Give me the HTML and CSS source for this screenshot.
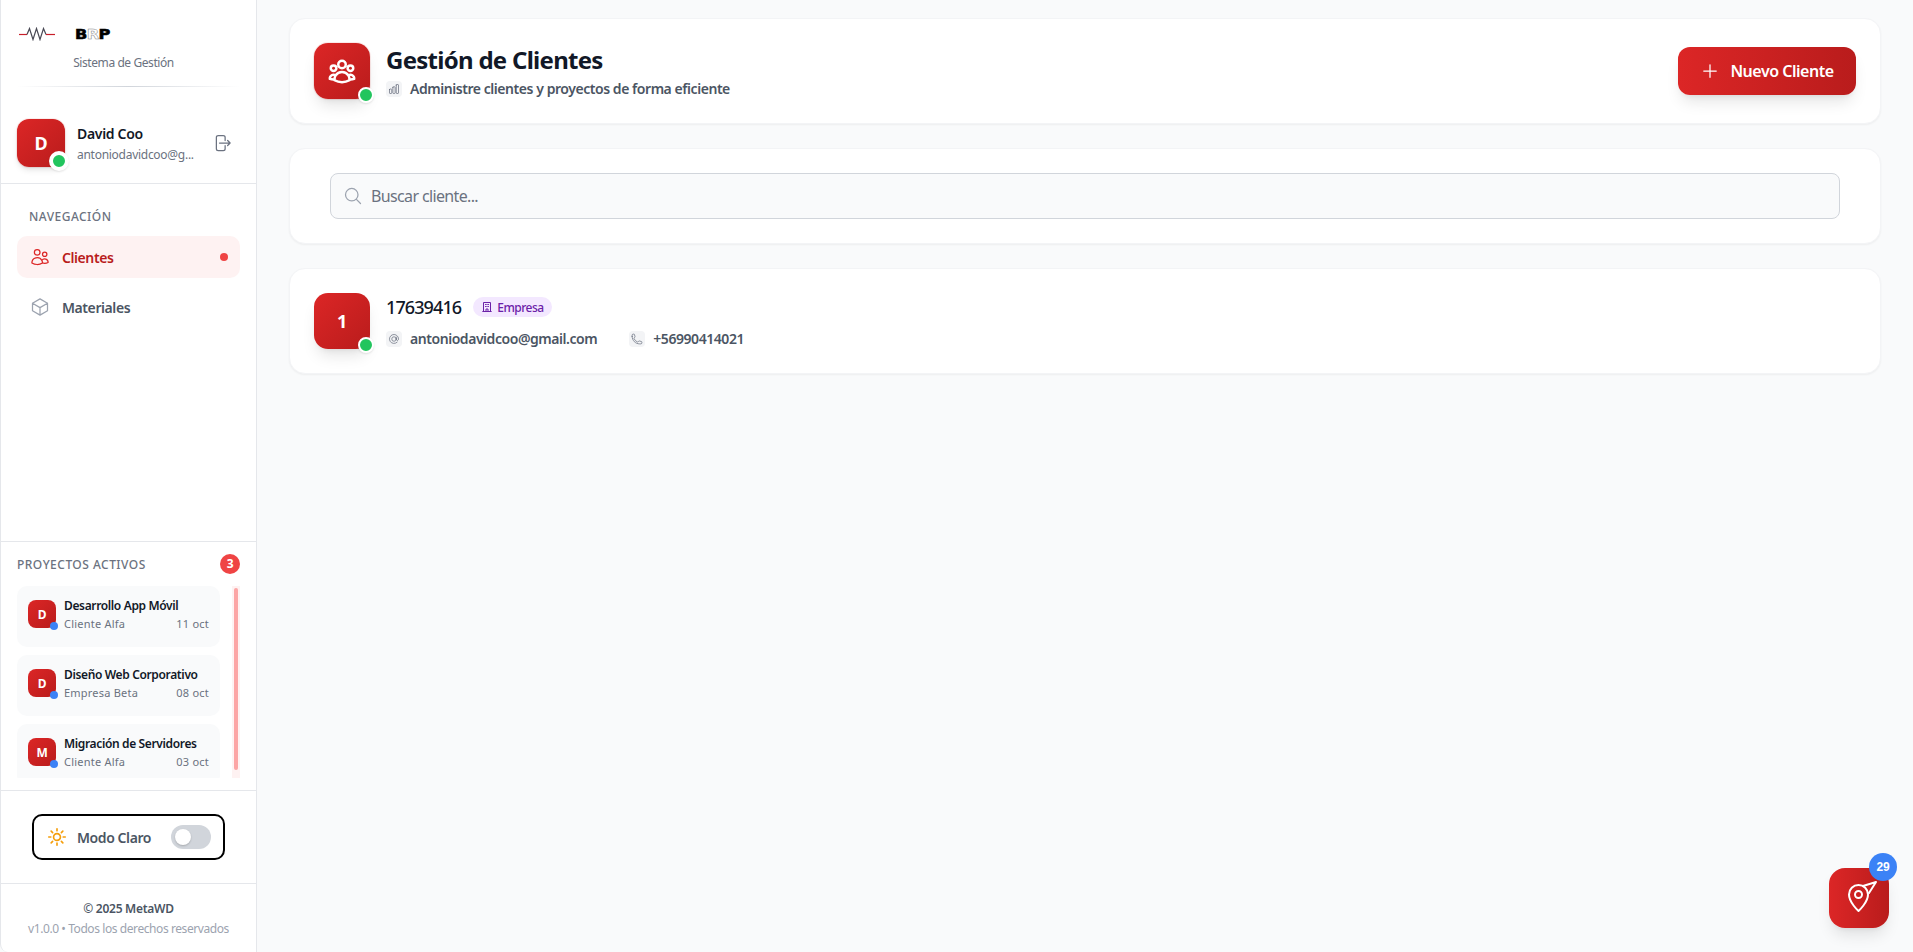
FILE: index.html
```html
<!DOCTYPE html>
<html lang="es">
<head>
    <meta charset="UTF-8">
    <meta name="viewport" content="width=device-width, initial-scale=1.0">
    <title>Gestión de Clientes</title>
    <link rel="stylesheet" href="styles.css">
</head>
<body>
    <div class="app">
        <aside class="sidebar">
            <div class="brand">
                <div class="logo">
                    <svg class="logo-wave" viewBox="0 0 36 14" fill="none" stroke-width="1.2">
                        <path d="M0 7.5h8" stroke="#c81e2a"/>
                        <path d="M8 7.5l2.5-6 3.5 11 3.5-11 3.5 11 3.5-11 2.5 6" stroke="#4a4a55"/>
                        <path d="M27 7.5h9" stroke="#c81e2a"/>
                    </svg>
                    <span class="logo-text">B<span class="logo-r">R</span>P</span>
                </div>
                <p class="brand-sub">Sistema de Gestión</p>
                <div class="brand-line"></div>
            </div>

            <div class="user">
                <div class="avatar avatar-user">D<span class="status status-user"></span></div>
                <div class="user-info">
                    <div class="user-name">David Coo</div>
                    <div class="user-mail">antoniodavidcoo@g...</div>
                </div>
                <svg class="logout" viewBox="0 0 24 24" fill="none" stroke="currentColor" stroke-width="1.5" stroke-linecap="round" stroke-linejoin="round">
                    <path d="M15.75 9V5.25A2.25 2.25 0 0 0 13.5 3h-6a2.25 2.25 0 0 0-2.25 2.25v13.5A2.25 2.25 0 0 0 7.5 21h6a2.25 2.25 0 0 0 2.25-2.25V15m3 0 3-3m0 0-3-3m3 3H9"/>
                </svg>
            </div>

            <nav class="nav">
                <div class="nav-title">NAVEGACIÓN</div>
                <a class="nav-item nav-active">
                    <svg class="nav-icon" viewBox="0 0 24 24" fill="none" stroke="currentColor" stroke-width="1.5" stroke-linecap="round" stroke-linejoin="round">
                        <path d="M15 19.128a9.38 9.38 0 0 0 2.625.372 9.337 9.337 0 0 0 4.121-.952 4.125 4.125 0 0 0-7.533-2.493M15 19.128v-.003c0-1.113-.285-2.16-.786-3.07M15 19.128v.106A12.318 12.318 0 0 1 8.624 21c-2.331 0-4.512-.645-6.374-1.766l-.001-.109a6.375 6.375 0 0 1 11.964-3.07M12 6.375a3.375 3.375 0 1 1-6.75 0 3.375 3.375 0 0 1 6.75 0Zm8.25 2.25a2.625 2.625 0 1 1-5.25 0 2.625 2.625 0 0 1 5.25 0Z"/>
                    </svg>
                    <span>Clientes</span>
                    <span class="nav-dot"></span>
                </a>
                <a class="nav-item">
                    <svg class="nav-icon nav-icon-muted" viewBox="0 0 24 24" fill="none" stroke="currentColor" stroke-width="1.5" stroke-linecap="round" stroke-linejoin="round">
                        <path d="m21 7.5-9-5.25L3 7.5m18 0-9 5.25m9-5.25v9l-9 5.25M3 7.5l9 5.25M3 7.5v9l9 5.25m0-9v9"/>
                    </svg>
                    <span>Materiales</span>
                </a>
            </nav>

            <section class="projects">
                <div class="projects-head">
                    <span class="projects-title">PROYECTOS ACTIVOS</span>
                    <span class="projects-count">3</span>
                </div>
                <div class="projects-body">
                    <div class="projects-list">
                        <div class="project">
                            <div class="avatar avatar-project">D<span class="status status-project"></span></div>
                            <div class="project-info">
                                <div class="project-name">Desarrollo App Móvil</div>
                                <div class="project-meta"><span>Cliente Alfa</span><span>11 oct</span></div>
                            </div>
                        </div>
                        <div class="project">
                            <div class="avatar avatar-project">D<span class="status status-project"></span></div>
                            <div class="project-info">
                                <div class="project-name">Diseño Web Corporativo</div>
                                <div class="project-meta"><span>Empresa Beta</span><span>08 oct</span></div>
                            </div>
                        </div>
                        <div class="project">
                            <div class="avatar avatar-project">M<span class="status status-project"></span></div>
                            <div class="project-info">
                                <div class="project-name">Migración de Servidores</div>
                                <div class="project-meta"><span>Cliente Alfa</span><span>03 oct</span></div>
                            </div>
                        </div>
                    </div>
                    <div class="scroll-track"><div class="scroll-thumb"></div></div>
                </div>
            </section>

            <div class="theme">
                <div class="theme-box">
                    <svg class="theme-sun" viewBox="0 0 24 24" fill="none" stroke="currentColor" stroke-width="1.8" stroke-linecap="round" stroke-linejoin="round">
                        <path d="M12 3v2.25m6.364.386-1.591 1.591M21 12h-2.25m-.386 6.364-1.591-1.591M12 18.75V21m-4.773-4.227-1.591 1.591M5.25 12H3m4.227-4.773L5.636 5.636M15.75 12a3.75 3.75 0 1 1-7.5 0 3.75 3.75 0 0 1 7.5 0Z"/>
                    </svg>
                    <span class="theme-label">Modo Claro</span>
                    <span class="switch"><span class="switch-knob"></span></span>
                </div>
            </div>

            <footer class="side-foot">
                <div class="side-copy">© 2025 MetaWD</div>
                <div class="side-version">v1.0.0 • Todos los derechos reservados</div>
            </footer>
        </aside>

        <main class="main">
            <div class="card card-head">
                <div class="avatar avatar-big avatar-ring">
                    <svg class="head-icon" viewBox="0 0 24 24" fill="none" stroke="currentColor" stroke-width="2" stroke-linecap="round" stroke-linejoin="round">
                        <path d="M18 18.72a9.094 9.094 0 0 0 3.741-.479 3 3 0 0 0-4.682-2.72m.94 3.198.001.031c0 .225-.012.447-.037.666A11.944 11.944 0 0 1 12 21c-2.17 0-4.207-.576-5.963-1.584A6.062 6.062 0 0 1 6 18.719m12 0a5.971 5.971 0 0 0-.941-3.197m0 0A5.995 5.995 0 0 0 12 12.75a5.995 5.995 0 0 0-5.058 2.772m0 0a3 3 0 0 0-4.681 2.72 8.986 8.986 0 0 0 3.74.477m.94-3.197a5.971 5.971 0 0 0-.94 3.197M15 6.75a3 3 0 1 1-6 0 3 3 0 0 1 6 0Zm6 3a2.25 2.25 0 1 1-4.5 0 2.25 2.25 0 0 1 4.5 0Zm-13.5 0a2.25 2.25 0 1 1-4.5 0 2.25 2.25 0 0 1 4.5 0Z"/>
                    </svg>
                    <span class="status status-big"></span>
                </div>
                <div class="head-text">
                    <h1>Gestión de Clientes</h1>
                    <div class="line">
                        <span class="chip">
                            <svg viewBox="0 0 24 24" fill="none" stroke="currentColor" stroke-width="1.5" stroke-linecap="round" stroke-linejoin="round">
                                <path d="M3 13.125C3 12.504 3.504 12 4.125 12h2.25c.621 0 1.125.504 1.125 1.125v6.75C7.5 20.496 6.996 21 6.375 21h-2.25A1.125 1.125 0 0 1 3 19.875v-6.75ZM9.75 8.625c0-.621.504-1.125 1.125-1.125h2.25c.621 0 1.125.504 1.125 1.125v11.25c0 .621-.504 1.125-1.125 1.125h-2.25a1.125 1.125 0 0 1-1.125-1.125V8.625ZM16.5 4.125c0-.621.504-1.125 1.125-1.125h2.25C20.496 3 21 3.504 21 4.125v15.75c0 .621-.504 1.125-1.125 1.125h-2.25a1.125 1.125 0 0 1-1.125-1.125V4.125Z"/>
                            </svg>
                        </span>
                        <span>Administre clientes y proyectos de forma eficiente</span>
                    </div>
                </div>
                <button class="btn-new" type="button">
                    <svg viewBox="0 0 24 24" fill="none" stroke="currentColor" stroke-width="1.5" stroke-linecap="round" stroke-linejoin="round">
                        <path d="M12 4.5v15m7.5-7.5h-15"/>
                    </svg>
                    Nuevo Cliente
                </button>
            </div>

            <div class="card card-search">
                <div class="search">
                    <svg viewBox="0 0 24 24" fill="none" stroke="currentColor" stroke-width="1.5" stroke-linecap="round" stroke-linejoin="round">
                        <path d="m21 21-5.197-5.197m0 0A7.5 7.5 0 1 0 5.196 5.196a7.5 7.5 0 0 0 10.607 10.607Z"/>
                    </svg>
                    <input type="text" placeholder="Buscar cliente...">
                </div>
            </div>

            <div class="card card-client">
                <div class="avatar avatar-big">1<span class="status status-big"></span></div>
                <div class="client-text">
                    <div class="client-top">
                        <span class="client-name">17639416</span>
                        <span class="tag">
                            <svg viewBox="0 0 24 24" fill="none" stroke="currentColor" stroke-width="2" stroke-linecap="round" stroke-linejoin="round">
                                <path d="M5 21V3h14v18M3.5 21h17M9 7h1.5M13.5 7H15M9 11h1.5M13.5 11H15M10 21v-5h4v5"/>
                            </svg>
                            Empresa
                        </span>
                    </div>
                    <div class="client-contacts">
                        <div class="line">
                            <span class="chip">
                                <svg viewBox="0 0 24 24" fill="none" stroke="currentColor" stroke-width="1.5" stroke-linecap="round" stroke-linejoin="round">
                                    <path d="M16.5 12a4.5 4.5 0 1 1-9 0 4.5 4.5 0 0 1 9 0Zm0 0c0 1.657 1.007 3 2.25 3S21 13.657 21 12a9 9 0 1 0-2.636 6.364M16.5 12V8.25"/>
                                </svg>
                            </span>
                            <span>antoniodavidcoo@gmail.com</span>
                        </div>
                        <div class="line">
                            <span class="chip">
                                <svg viewBox="0 0 24 24" fill="none" stroke="currentColor" stroke-width="1.5" stroke-linecap="round" stroke-linejoin="round">
                                    <path d="M2.25 6.75c0 8.284 6.716 15 15 15h2.25a2.25 2.25 0 0 0 2.25-2.25v-1.372c0-.516-.351-.966-.852-1.091l-4.423-1.106c-.44-.11-.902.055-1.173.417l-.97 1.293c-.282.376-.769.542-1.21.38a12.035 12.035 0 0 1-7.143-7.143c-.162-.441.004-.928.38-1.21l1.293-.97c.363-.271.527-.734.417-1.173L6.963 3.102a1.125 1.125 0 0 0-1.091-.852H4.5A2.25 2.25 0 0 0 2.25 4.5v2.25Z"/>
                                </svg>
                            </span>
                            <span>+56990414021</span>
                        </div>
                    </div>
                </div>
            </div>
        </main>
    </div>

    <button class="fab" type="button">
        <svg viewBox="0 0 36 36" fill="none" stroke="currentColor" stroke-width="2" stroke-linecap="round" stroke-linejoin="round">
            <path d="M27 14.500c0 8-9.500 16.500-9.500 16.500S8 22.500 8 14.500a9.500 9.500 0 0 1 19 0Z"/>
            <circle cx="17.500" cy="14.500" r="3.500"/>
            <path d="M22 6 35 2l-7 11"/>
        </svg>
        <span class="fab-count">29</span>
    </button>
</body>
</html>
```

FILE: styles.css
```css
* {
    box-sizing: border-box;
    letter-spacing: -0.023em;
}
html, body {
    height: 100%;
}
body {
    margin: 0;
    font-family: "Noto Sans", "Open Sans", sans-serif;
    background-color: #f9fafb;
    color: #111827;
    overflow: hidden;
}
.app {
    display: flex;
    height: 100vh;
}

/* barra lateral */
.sidebar {
    width: 257px;
    flex-shrink: 0;
    display: flex;
    flex-direction: column;
    background-color: #fff;
    border-left: 1px solid #e5e7eb;
    border-right: 1px solid #e5e7eb;
    border-bottom-left-radius: 8px;
}
.brand {
    height: 87px;
    padding: 26px 16px 0;
    position: relative;
}
.logo {
    display: flex;
    align-items: center;
    gap: 20px;
    height: 16px;
    padding-left: 2px;
}
.logo-wave {
    width: 36px;
    height: 14px;
}
.logo-text {
    font-family: "DejaVu Sans", sans-serif;
    font-weight: 700;
    font-size: 14px;
    line-height: 16px;
    letter-spacing: -0.5px;
    color: #000;
    -webkit-text-stroke: 0.6px #000;
    transform: scaleX(1.15);
    transform-origin: left center;
}
.logo-r {
    color: #fff;
    letter-spacing: -0.5px;
    -webkit-text-stroke: 0.5px #888;
}
.brand-sub {
    margin: 13px 0 0;
    padding-right: 10px;
    font-size: 12px;
    line-height: 16px;
    letter-spacing: -0.035em;
    color: #6b7280;
    text-align: center;
}
.brand-line {
    position: absolute;
    left: 16px;
    right: 16px;
    bottom: 0;
    height: 1px;
    background: linear-gradient(to right, transparent, #d1d5db, transparent);
}
.user {
    height: 97px;
    padding: 32px 16px 0;
    display: flex;
    align-items: flex-start;
    gap: 12px;
    border-bottom: 1px solid #e5e7eb;
}
.avatar {
    position: relative;
    flex-shrink: 0;
    display: flex;
    align-items: center;
    justify-content: center;
    color: #fff;
    font-weight: 700;
    background: linear-gradient(135deg, #dc2626, #b91c1c);
}
.avatar-user {
    width: 48px;
    height: 48px;
    border-radius: 12px;
    font-size: 18px;
    box-shadow: 0 4px 6px -1px rgba(0, 0, 0, 0.1), 0 2px 4px -2px rgba(0, 0, 0, 0.1), 0 0 0 1px rgba(220, 38, 38, 0.08);
}
.status {
    position: absolute;
    border-radius: 50%;
}
.status-user, .status-big {
    right: -4px;
    bottom: -4px;
    background-color: #22c55e;
    border-style: solid;
    border-color: #fff;
    box-shadow: 0 1px 2px rgba(0, 0, 0, 0.1);
}
.status-user {
    width: 20px;
    height: 20px;
    border-width: 4px;
}
.status-big {
    width: 16px;
    height: 16px;
    border-width: 2px;
}
.user-info {
    flex: 1;
    min-width: 0;
    padding-top: 5px;
}
.user-name {
    font-size: 14px;
    line-height: 20px;
    font-weight: 600;
}
.user-mail {
    margin-top: 3px;
    font-size: 12px;
    line-height: 16px;
    color: #6b7280;
}
.logout {
    width: 20px;
    height: 20px;
    margin: 14px 8px 0 0;
    color: #6b7280;
}

/* navegación */
.nav {
    flex: 1;
    padding: 25px 16px 0;
}
.nav-title {
    padding-left: 12px;
    margin-bottom: 11px;
    font-size: 12px;
    line-height: 16px;
    font-weight: 500;
    letter-spacing: 0.04em;
    color: #6b7280;
}
.nav-item {
    display: flex;
    align-items: center;
    gap: 12px;
    height: 42px;
    padding: 0 12px 0 13px;
    margin-bottom: 8px;
    border-radius: 10px;
    font-size: 14px;
    font-weight: 600;
    color: #4b5563;
}
.nav-item span {
    letter-spacing: -0.03em;
}
.nav-active {
    background-color: #fef2f2;
    color: #b91c1c;
}
.nav-icon {
    width: 20px;
    height: 20px;
    color: #dc2626;
}
.nav-icon-muted {
    color: #9ca3af;
}
.nav-dot {
    width: 8px;
    height: 8px;
    margin-left: auto;
    border-radius: 50%;
    background-color: #ef4444;
}

/* proyectos activos */
.projects {
    height: 250px;
    flex-shrink: 0;
    padding: 12px 16px 0;
    border-top: 1px solid #e5e7eb;
    border-bottom: 1px solid #e5e7eb;
}
.projects-head {
    display: flex;
    align-items: center;
    justify-content: space-between;
    height: 20px;
    margin-bottom: 12px;
}
.projects-title {
    font-size: 12px;
    font-weight: 500;
    letter-spacing: 0.04em;
    color: #6b7280;
}
.projects-count {
    width: 20px;
    height: 20px;
    border-radius: 50%;
    background-color: #ef4444;
    color: #fff;
    font-size: 12px;
    font-weight: 700;
    text-align: center;
    line-height: 20px;
}
.projects-body {
    display: flex;
    justify-content: space-between;
    height: 192px;
    overflow: hidden;
}
.projects-list {
    width: 203px;
    display: flex;
    flex-direction: column;
    gap: 8px;
}
.project {
    display: flex;
    flex-shrink: 0;
    gap: 8px;
    height: 61px;
    padding: 14px 11px 0;
    border-radius: 10px;
    background-color: #f9fafb;
}
.avatar-project {
    width: 28px;
    height: 28px;
    border-radius: 8px;
    font-size: 12px;
}
.status-project {
    width: 8px;
    height: 8px;
    right: -2px;
    bottom: -2px;
    background-color: #3b82f6;
}
.project-info {
    flex: 1;
    min-width: 0;
    margin-top: -2px;
}
.project-name {
    font-size: 12px;
    line-height: 16px;
    font-weight: 600;
    white-space: nowrap;
    letter-spacing: -0.03em;
}
.project-meta {
    display: flex;
    justify-content: space-between;
    margin-top: 2px;
    font-size: 11px;
    line-height: 16px;
    color: #6b7280;
}
.project-meta span {
    letter-spacing: 0.02em;
}
.scroll-track {
    width: 8px;
    padding: 2px;
    background-color: #fef2f2;
}
.scroll-thumb {
    height: 182px;
    border-radius: 2px;
    background-color: #fca5a5;
}

/* tema */
.theme {
    height: 93px;
    flex-shrink: 0;
    padding: 23px 31px 0;
    border-bottom: 1px solid #e5e7eb;
}
.theme-box {
    display: flex;
    align-items: center;
    width: 193px;
    height: 46px;
    padding: 0 12px;
    border: 2px solid #000;
    border-radius: 10px;
}
.theme-sun {
    width: 22px;
    height: 22px;
    color: #f59e0b;
}
.theme-label {
    flex: 1;
    margin-left: 9px;
    font-size: 14px;
    font-weight: 600;
    letter-spacing: -0.03em;
    color: #4b5563;
}
.switch {
    display: flex;
    align-items: center;
    width: 40px;
    height: 24px;
    padding-left: 4px;
    border-radius: 12px;
    background-color: #d1d5db;
}
.switch-knob {
    width: 16px;
    height: 16px;
    border-radius: 50%;
    background-color: #fff;
    box-shadow: 0 1px 2px rgba(0, 0, 0, 0.2);
}
.side-foot {
    height: 68px;
    flex-shrink: 0;
    padding-top: 17px;
    text-align: center;
    font-size: 12px;
    line-height: 16px;
}
.side-copy {
    font-weight: 600;
    color: #4b5563;
}
.side-version {
    margin-top: 4px;
    letter-spacing: -0.035em;
    color: #9ca3af;
}

/* contenido */
.main {
    flex: 1;
    min-width: 0;
    padding: 18px 32px 0;
    display: flex;
    flex-direction: column;
    gap: 24px;
}
.card {
    background-color: #fff;
    border: 1px solid #f3f4f6;
    border-radius: 16px;
    box-shadow: 0 1px 2px rgba(0, 0, 0, 0.05);
}
.card-head, .card-client {
    display: flex;
    align-items: center;
    gap: 16px;
    height: 106px;
    padding: 0 24px;
}
.avatar-big {
    width: 56px;
    height: 56px;
    border-radius: 14px;
    font-size: 18px;
    box-shadow: 0 10px 15px -3px rgba(0, 0, 0, 0.1), 0 4px 6px -4px rgba(0, 0, 0, 0.1);
}
.avatar-ring {
    box-shadow: 0 10px 15px -3px rgba(0, 0, 0, 0.1), 0 4px 6px -4px rgba(0, 0, 0, 0.1), 0 0 0 1px rgba(220, 38, 38, 0.1);
}
.head-icon {
    width: 30px;
    height: 30px;
}
.head-text {
    flex: 1;
}
h1 {
    margin: 0 0 3px;
    font-size: 24px;
    line-height: 32px;
    font-weight: 700;
    letter-spacing: -0.03em;
}
.line {
    display: flex;
    align-items: center;
    gap: 8px;
    font-size: 14px;
    line-height: 20px;
    font-weight: 600;
    color: #4b5563;
}
.line span {
    letter-spacing: -0.032em;
}
.chip {
    display: flex;
    align-items: center;
    justify-content: center;
    width: 16px;
    height: 16px;
    border-radius: 4px;
    background-color: #f3f4f6;
    color: #6b7280;
}
.chip svg {
    width: 12px;
    height: 12px;
}
.btn-new {
    display: flex;
    align-items: center;
    justify-content: center;
    gap: 10px;
    width: 178px;
    height: 48px;
    border: none;
    border-radius: 12px;
    background: linear-gradient(to right, #dc2626, #b91c1c);
    color: #fff;
    font-family: inherit;
    font-size: 16px;
    font-weight: 600;
    letter-spacing: -0.03em;
    box-shadow: 0 10px 15px -3px rgba(0, 0, 0, 0.1), 0 4px 6px -4px rgba(0, 0, 0, 0.1);
    cursor: pointer;
}
.btn-new svg {
    width: 20px;
    height: 20px;
    flex-shrink: 0;
}
.card-search {
    height: 96px;
    padding: 24px 40px;
}
.search {
    display: flex;
    align-items: center;
    gap: 6px;
    height: 46px;
    padding: 0 12px;
    background-color: #f9fafb;
    border: 1px solid #d1d5db;
    border-radius: 8px;
    color: #9ca3af;
}
.search svg {
    width: 20px;
    height: 20px;
    flex-shrink: 0;
}
.search input {
    flex: 1;
    border: none;
    outline: none;
    background: transparent;
    font-family: inherit;
    font-size: 16px;
    letter-spacing: -0.04em;
    color: #111827;
}
.search input::placeholder {
    color: #6b7280;
    letter-spacing: -0.04em;
}
.client-text {
    flex: 1;
}
.client-top {
    display: flex;
    align-items: center;
    gap: 12px;
    margin-bottom: 8px;
}
.client-name {
    font-size: 18px;
    line-height: 28px;
    font-weight: 500;
    letter-spacing: -0.05em;
}
.tag {
    display: flex;
    align-items: center;
    gap: 4px;
    height: 20px;
    padding: 0 8px;
    border-radius: 10px;
    background-color: #f3e8ff;
    color: #6b21a8;
    font-size: 12px;
    font-weight: 500;
    letter-spacing: -0.04em;
}
.tag svg {
    width: 12px;
    height: 12px;
}
.client-contacts {
    display: flex;
    gap: 32px;
}

/* botón flotante */
.fab {
    position: fixed;
    right: 24px;
    bottom: 24px;
    width: 60px;
    height: 60px;
    display: flex;
    align-items: center;
    justify-content: center;
    border: none;
    border-radius: 16px;
    background: linear-gradient(to right, #dc2626, #b91c1c);
    color: #fff;
    box-shadow: 0 10px 15px -3px rgba(0, 0, 0, 0.1), 0 4px 6px -4px rgba(0, 0, 0, 0.1);
}
.fab svg {
    width: 36px;
    height: 36px;
    flex-shrink: 0;
}
.fab-count {
    position: absolute;
    top: -15px;
    right: -8px;
    width: 28px;
    height: 28px;
    border-radius: 50%;
    background-color: #3b82f6;
    color: #fff;
    font-family: inherit;
    font-size: 12px;
    font-weight: 700;
    line-height: 28px;
    text-align: center;
}
```
